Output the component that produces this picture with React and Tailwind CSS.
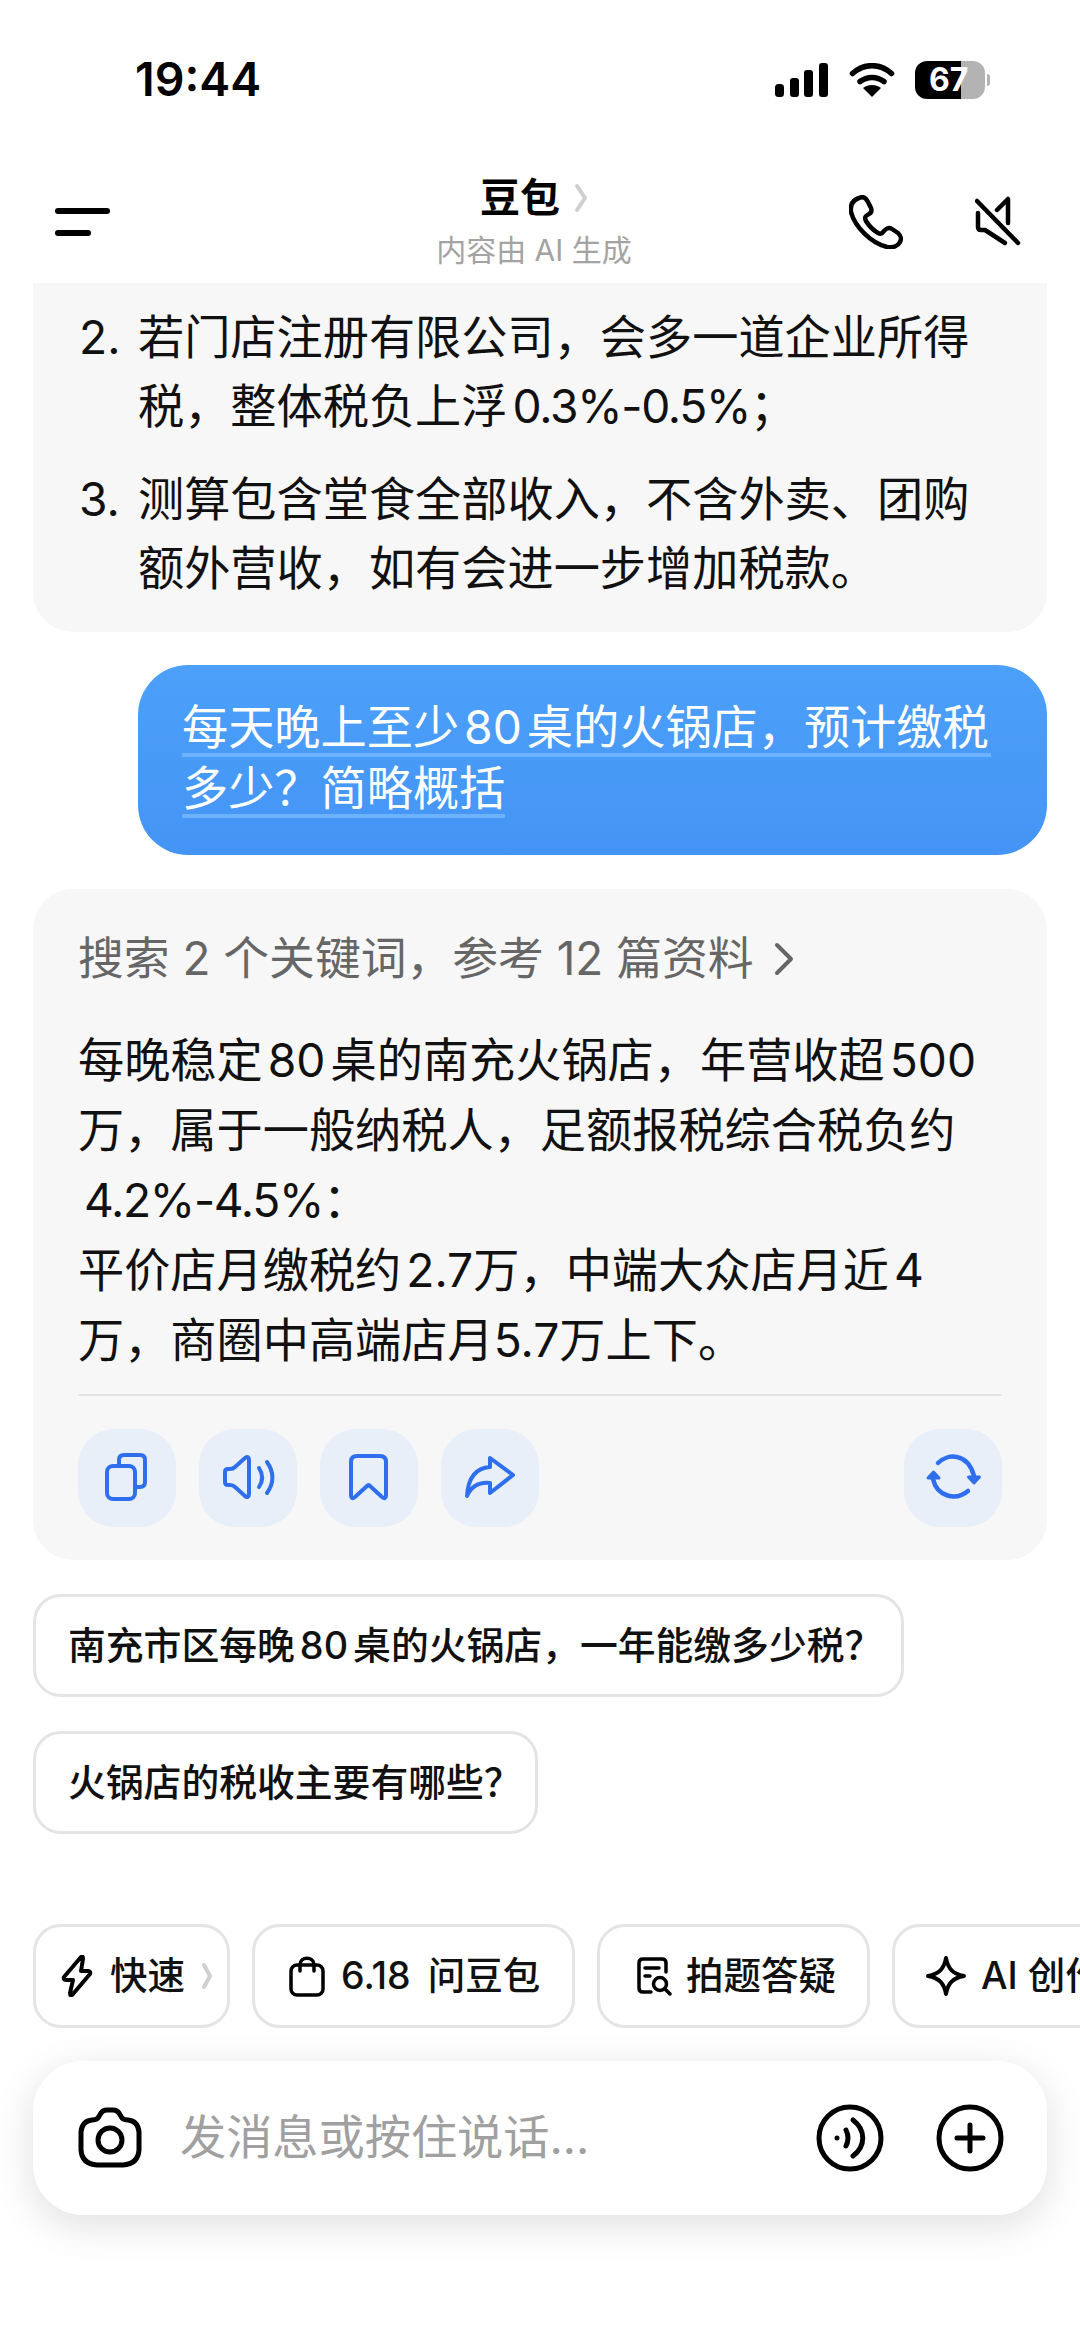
import React from 'react';

const font = { fontFamily: 'Inter, "Noto Sans CJK SC", sans-serif' };
const Blue = '#2f6fed';

function Phone() {
  return (
    <svg width="54" height="54" viewBox="0 0 54 54" fill="none" stroke="#000" strokeWidth="4.5" strokeLinejoin="round">
      <path d="M10 3C14 1 17 3 19 7L22 13C23 16 22 18 20 19L17 21C16 22 16 24 17 26C20 31 24 35 29 38C31 39 33 39 34 37L36 35C38 33 40 32 43 34L49 38C52 41 53 43 51 47C49 51 44 53 38 52C22 48 6 32 2 17C1 10 4 5 10 3Z" />
    </svg>
  );
}
function Mute() {
  return (
    <svg width="46" height="52" viewBox="0 0 46 52" fill="none" stroke="#000" strokeWidth="4.5" strokeLinecap="round" strokeLinejoin="round">
      <path d="M2 5L43 47" />
      <path d="M22 14L33 3V27" />
      <path d="M3 17V31Q3 34 6 34H10L30 47" />
    </svg>
  );
}
function Chevron({ w = 14, h = 30, color = '#cfcfcf', sw = 4 }) {
  return (
    <svg width={w} height={h} viewBox={`0 0 ${w} ${h}`} fill="none" stroke={color} strokeWidth={sw} strokeLinecap="round" strokeLinejoin="round">
      <path d={`M3 3L${w - 3} ${h / 2}L3 ${h - 3}`} />
    </svg>
  );
}
function ActionBtn({ children, sw = 4 }) {
  return (
    <div className="w-[98px] h-[98px] rounded-[36px] bg-[#e8eff8] flex items-center justify-center">
      <svg width="98" height="98" viewBox="0 0 98 98" fill="none" stroke={Blue} strokeWidth={sw} strokeLinecap="round" strokeLinejoin="round">
        {children}
      </svg>
    </div>
  );
}

function Pill({ w, children }) {
  return (
    <div className={`${w} h-[103px] pl-[32px] flex items-center rounded-[28px] border-[3px] border-[#e4e4e4] bg-white text-[37.8px] [word-spacing:-5px] font-medium text-[#111] whitespace-nowrap`}>
      {children}
    </div>
  );
}
function Chip({ w, pl, icon, children, gap = 'gap-[18px]', extra }) {
  return (
    <div className={`${w} ${pl} shrink-0 h-[104px] rounded-[28px] border-[3px] border-[#e4e4e4] bg-white flex items-center justify-start ${gap} text-[37.5px] font-medium text-[#111] whitespace-nowrap`}>
      {icon}
      <span>{children}</span>
      {extra}
    </div>
  );
}

export default function App() {
  return (
    <div style={font} className="w-[1080px] h-[2341px] bg-white overflow-hidden flex flex-col text-[#111]">
      {/* status bar */}
      <div className="h-[160px] shrink-0 flex items-center justify-between pl-[135px] pr-[90px]">
        <span className="text-[46.5px] font-semibold text-black">19:44</span>
        <div className="flex items-center">
          <svg width="54" height="34" viewBox="0 0 54 34" fill="#000">
            <rect x="0" y="21" width="9" height="13" rx="3.5" />
            <rect x="15" y="15" width="9" height="19" rx="3" />
            <rect x="29" y="7" width="9" height="27" rx="3" />
            <rect x="44" y="0" width="9" height="34" rx="3" />
          </svg>
          <svg className="ml-[20px]" width="46" height="34" viewBox="0 0 46 34">
            <path d="M3.5 10.5C15 0 31 0 42.5 10.5" fill="none" stroke="#000" strokeWidth="5.5" strokeLinecap="round" />
            <path d="M11 18.5C18 13 28 13 35 18.5" fill="none" stroke="#000" strokeWidth="5.5" strokeLinecap="round" />
            <path d="M23 34L14 25C19 21 27 21 32 25Z" fill="#000" />
          </svg>
          <div className="ml-[20px] w-[70px] h-[38px] rounded-[12px] bg-[linear-gradient(90deg,#000_0,#000_46px,#b3b3b3_46px)] flex items-center pl-[14px] text-white text-[32px] font-bold leading-none">
            67
          </div>
          <div className="ml-[2px] w-[3px] h-[12px] rounded-r-full bg-[#b3b3b3]" />
        </div>
      </div>

      {/* header */}
      <div className="h-[123px] shrink-0 grid grid-cols-[300px_468px_312px] items-center">
        <div className="pl-[55px] flex flex-col gap-[16px] items-start">
          <div className="w-[55px] h-[6px] rounded-full bg-black" />
          <div className="w-[36px] h-[6px] rounded-full bg-black" />
        </div>
        <div className="flex flex-col items-center">
          <div className="h-[50px] flex items-center gap-[14px]">
            <span className="text-[40px] font-semibold text-black leading-none">豆包</span>
            <Chevron />
          </div>
          <div className="mt-[7px] h-[40px] flex items-center text-[30px] text-[#a3a3a3]">内容由 AI 生成</div>
        </div>
        <div className="flex items-center justify-end pr-[59px] gap-[72px]">
          <Phone />
          <Mute />
        </div>
      </div>

      {/* messages */}
      <div className="px-[33px] flex flex-col">
        <div className="bg-[#f7f7f7] rounded-b-[40px] pt-[20px] pb-[29px] pl-[46px] text-[46.2px] leading-[69px] flex flex-col gap-[24px] [word-spacing:-8px]">
          <div className="flex">
            <span className="w-[59px] shrink-0">2.</span>
            <div className="whitespace-nowrap">
              <div>若门店注册有限公司，会多一道企业所得</div>
              <div>税，整体税负上浮 <span className="tracking-[-1.3px]">0.3%-0.5%；</span></div>
            </div>
          </div>
          <div className="flex">
            <span className="w-[59px] shrink-0">3.</span>
            <div className="whitespace-nowrap">
              <div>测算包含堂食全部收入，不含外卖、团购</div>
              <div>额外营收，如有会进一步增加税款。</div>
            </div>
          </div>
        </div>

        <div className="mt-[33px] ml-[105px] h-[190px] rounded-[50px] bg-[linear-gradient(180deg,#4ca0f9,#4494f5)] pl-[44px] pt-[31px] text-white text-[46.2px] whitespace-nowrap flex flex-col items-start [word-spacing:-8px]">
          <div className="border-b-[4px] border-[#6db2ff] h-[61px] leading-[62px] w-[809px]">每天晚上至少 80 桌的火锅店，预计缴税</div>
          <div className="border-b-[4px] border-[#6db2ff] h-[61px] leading-[62px]">多少？简略概括</div>
        </div>

        <div className="mt-[34px] h-[671px] rounded-[40px] bg-[#f7f7f7] px-[45px] pt-[44px] flex flex-col">
          <div className="flex items-center gap-[20px] text-[45.8px] leading-[52px] text-[#666] whitespace-nowrap">
            <span>搜索 2 个关键词，参考 12 篇资料</span>
            <Chevron w={20} h={34} color="#666" sw={4} />
          </div>
          <div className="mt-[40px] text-[46.2px] leading-[70px] whitespace-nowrap [word-spacing:-8px]">
            <div>每晚稳定 80 桌的南充火锅店，年营收超 500</div>
            <div>万，属于一般纳税人，足额报税综合税负约</div>
            <div className="pl-[6px] tracking-[-1.3px]">4.2%-4.5%：</div>
            <div>平价店月缴税约 2.7万，中端大众店月近 4</div>
            <div>万，商圈中高端店月5.7万上下。</div>
          </div>
          <div className="mt-[19px] h-[2px] bg-[#e5e5e5]" />
          <div className="mt-[33px] flex gap-[23px]">
            <ActionBtn>
              <rect x="29" y="37" width="28" height="33" rx="6" />
              <path d="M41 36V31Q41 26 46 26H62Q67 26 67 31V53Q67 58 62 58H58" />
            </ActionBtn>
            <ActionBtn>
              <path d="M50 31C50 28 48 27 46 29L36 38Q34 40 31 40H29Q26 40 26 43V53Q26 56 29 56H31Q34 56 36 58L46 67C48 69 50 68 50 65Z" />
              <path d="M60 39C64 45 64 52 60 58" />
              <path d="M68 33C75 43 75 54 68 64" />
            </ActionBtn>
            <ActionBtn>
              <path d="M31 33Q31 27 37 27H60Q66 27 66 33V66Q66 71 62 68L50 57Q48.5 55 47 57L35 68Q31 71 31 66Z" />
            </ActionBtn>
            <ActionBtn>
              <path d="M49 29L72 46L49 64V54C38 53 30 58 26 67C27 50 34 39 49 38Z" />
            </ActionBtn>
            <div className="ml-auto">
              <ActionBtn sw={4.5}>
                <path d="M34 34C44 24 64 24 70 47" />
                <path d="M64.5 48H75.5L70 54Z" fill={Blue} strokeWidth="3" />
                <path d="M64 62C52 72 33 68 29 50" />
                <path d="M24 49H35L29.5 43Z" fill={Blue} strokeWidth="3" />
              </ActionBtn>
            </div>
          </div>
        </div>

        <div className="mt-[34px] flex flex-col gap-[34px]">
          <Pill w="w-[871px]">南充市区每晚 80 桌的火锅店，一年能缴多少税？</Pill>
          <Pill w="w-[505px]">火锅店的税收主要有哪些？</Pill>
        </div>
      </div>

      {/* chips */}
      <div className="mt-[90px] pl-[33px] flex gap-[22px] overflow-hidden">
        <Chip w="w-[197px]" pl="pl-[25px]" gap="gap-[16px]" icon={
          <svg width="33" height="42" viewBox="0 0 33 42" fill="none" stroke="#000" strokeWidth="4" strokeLinejoin="round">
            <path d="M20 2L3 22Q2 25 5 25H12L9 38Q9 42 12 39L29 19Q30 16 27 16H20L22 4Q22 0 20 2Z" />
          </svg>
        } extra={<Chevron w={12} h={28} />} >快速</Chip>
        <Chip w="w-[323px]" pl="pl-[34px]" gap="gap-[16px]" icon={
          <svg width="36" height="42" viewBox="0 0 36 42" fill="none" stroke="#000" strokeWidth="3.5" strokeLinecap="round" strokeLinejoin="round">
            <rect x="2" y="10" width="32" height="30" rx="6" />
            <path d="M11 16V10C11 1 25 1 25 10V16" />
          </svg>
        }><span className="[word-spacing:7px]">6.18 问豆包</span></Chip>
        <Chip w="w-[273px]" pl="pl-[36px]" gap="gap-[14px]" icon={
          <svg width="36" height="40" viewBox="0 0 36 40" fill="none" stroke="#000" strokeWidth="3.5" strokeLinecap="round" strokeLinejoin="round">
            <path d="M15 36H7Q3 36 3 32V7Q3 3 7 3H26Q30 3 30 7V16" />
            <path d="M9 12H23M9 20H14" />
            <circle cx="24" cy="28" r="6.5" />
            <path d="M29 33L34 38" />
          </svg>
        }>拍题答疑</Chip>
        <Chip w="w-[260px]" pl="pl-[30px]" gap="gap-[14px]" icon={
          <svg width="42" height="42" viewBox="0 0 42 42" fill="none" stroke="#000" strokeWidth="4" strokeLinejoin="round">
            <path d="M21 3C23 14 28 19 39 21C28 23 23 28 21 39C19 28 14 23 3 21C14 19 19 14 21 3Z" />
          </svg>
        }>AI 创作</Chip>
      </div>

      {/* input */}
      <div className="mt-[33px] mx-[33px] h-[154px] rounded-[50px] bg-white shadow-[0_10px_40px_rgba(0,0,0,0.13)] flex items-center pl-[44px] pr-[43px]">
        <svg width="66" height="64" viewBox="0 0 66 64" fill="none" stroke="#000" strokeWidth="5" strokeLinejoin="round">
          <path d="M21 12L24 7Q26 4 30 4H36Q40 4 42 7L45 12Q47 14 51 14Q61 15 62 26V44Q61 58 46 59H20Q5 58 4 44V26Q5 15 15 14Q19 14 21 12Z" />
          <circle cx="33" cy="34" r="12" />
        </svg>
        <span className="ml-[37px] flex-1 text-[46.2px] text-[#a0a0a0] whitespace-nowrap">发消息或按住说话...</span>
        <svg width="68" height="68" viewBox="0 0 68 68" fill="none" stroke="#000" strokeWidth="5" strokeLinecap="round">
          <circle cx="34" cy="34" r="31" />
          <circle cx="21" cy="34" r="2.5" fill="#000" stroke="none" />
          <path d="M30 26Q34 34 30 42" />
          <path d="M37 16C50 26 50 42 37 52" />
        </svg>
        <svg className="ml-[52px]" width="68" height="68" viewBox="0 0 68 68" fill="none" stroke="#000" strokeWidth="5" strokeLinecap="round">
          <circle cx="34" cy="34" r="31" />
          <path d="M21 34H47M34 21V47" />
        </svg>
      </div>
    </div>
  );
}
